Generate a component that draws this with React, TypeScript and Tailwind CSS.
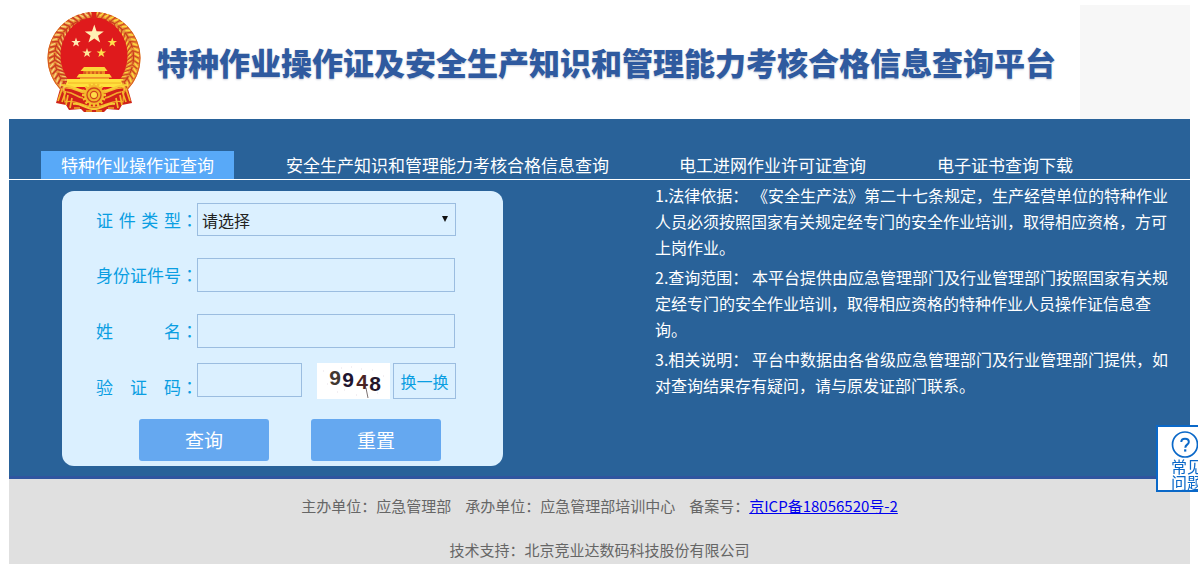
import React from "react";

function starPoints(cx: number, cy: number, r: number): string {
  return Array.from({ length: 10 }, (_, i) => {
    const radius = i % 2 === 0 ? r : r * 0.39;
    const angle = (Math.PI / 5) * i - Math.PI / 2;
    return `${(cx + radius * Math.cos(angle)).toFixed(2)},${(cy + radius * Math.sin(angle)).toFixed(2)}`;
  }).join(" ");
}

function Emblem() {
  const leftEars = Array.from({ length: 20 }, (_, i) => 132 + i * 7);
  const rightEars = Array.from({ length: 20 }, (_, i) => 48 - i * 7);
  const teeth = Array.from({ length: 16 }, (_, i) => i * 22.5);
  return (
    <svg viewBox="0 0 94 102" className="h-[102px] w-[94px] shrink-0" role="img" aria-label="国徽">
      <path d="M10 68 L84 68 L81 78 L85 92 L75 94 L72 99 L60 98 L57 101 L37 101 L34 98 L22 99 L19 94 L9 92 L13 78 Z" fill="#cf2319" />
      <ellipse cx="47" cy="47" rx="46.5" ry="46" fill="#e8963a" />
      <ellipse cx="47" cy="47" rx="46" ry="45.500" fill="none" stroke="#d9551f" strokeWidth="1" />
      <g fill="none">
        {leftEars.map((a) => (
          <g key={a} transform={`translate(47 46) rotate(${a})`}>
            <path d="M33 -4 L39 1 L45 -2" stroke="#cb3a24" strokeWidth="1.5" />
            <path d="M34 0 L37 2 M41 3 L45 0" stroke="#f9d27c" strokeWidth="1.3" />
          </g>
        ))}
        {rightEars.map((a) => (
          <g key={a} transform={`translate(47 46) rotate(${a})`}>
            <path d="M33 4 L39 -1 L45 2" stroke="#cf4a1c" strokeWidth="1.200" />
            <path d="M34 0 L37 -2 M41 -3 L45 0" stroke="#ffd83e" strokeWidth="1.500" />
          </g>
        ))}
      </g>
      <ellipse cx="47" cy="46" rx="39.500" ry="39" fill="none" stroke="#cc3a1e" strokeWidth="1.200" strokeDasharray="7 3" />
      <ellipse cx="47" cy="44.500" rx="33.500" ry="38" fill="#df1a1c" />
      <path d="M44.500 1 H49.500 V8 H44.500 Z" fill="#dc231b" />
      <polygon points={starPoints(47.3, 23.5, 10)} fill="#fff0b4" />
      <polygon points={starPoints(29, 31.5, 5)} fill="#ffebb4" />
      <polygon points={starPoints(65.3, 31.5, 5)} fill="#ffe04c" />
      <polygon points={starPoints(40, 42, 5)} fill="#ffe79a" />
      <polygon points={starPoints(54.3, 42, 5)} fill="#ffe04c" />
      <g fill="#fbd63a">
        <path d="M37 56 H57.500 L60.500 60 H33.500 Z" />
        <path d="M36.500 60 H58 V63 H36.500 Z" fill="#f08b24" />
        <path d="M32 63 H62.500 L65 66.500 H29.500 Z" />
        <path d="M33 66.500 H62 V69 H33 Z" fill="#f0a42a" />
        <path d="M20 68 H74.500 V71 L77 76 H17.500 L20 71 Z" fill="#ffe13c" />
      </g>
      <path d="M38 60.500 V63 M42 60.500 V63 M46 60.500 V63 M50 60.500 V63 M54 60.500 V63" stroke="#b9301a" strokeWidth="1" />
      <path d="M21 72 H74" stroke="#efa51f" strokeWidth="0.8" />
      <path d="M17 77 C28 76 33 83 40 82 L54 82 C61 83 66 76 77 77 L76 91 C64 88 58 96 47 96 C36 96 30 88 18 91 Z" fill="#d3201a" stroke="#f6b52d" strokeWidth="1.2" />
      <path d="M14 74 C24 74 29 79 37 80 M80 74 C70 74 65 79 57 80" fill="none" stroke="#f7ce36" strokeWidth="2.2" />
      <path d="M20 81 C27 82 30 86 36 87 M74 81 C67 82 64 86 58 87" fill="none" stroke="#f3a72c" strokeWidth="1.6" />
      <g transform="translate(47 84)">
        <circle r="10" fill="#f3b42b" />
        {teeth.map((a) => (
          <rect key={a} x="-1.2" y="-12" width="2.4" height="3.5" fill="#f5bd2e" transform={`rotate(${a})`} />
        ))}
        <circle r="7" fill="none" stroke="#d1461b" strokeWidth="1.3" />
        <circle r="3.6" fill="#ffdc48" stroke="#d1461b" strokeWidth="1.2" />
      </g>
      <path d="M15 78 L11 90 M19 80 L15 91 M21 84 L19 94 M25 87 L23 97 M79 78 L83 90 M75 80 L79 91 M73 84 L75 94 M69 87 L71 97" stroke="#f4b62c" strokeWidth="1.7" />
      <path d="M26 93 C33 91 38 98 47 98 C56 98 61 91 68 93" fill="none" stroke="#f6c936" strokeWidth="2" />
      <path d="M27 97 H33 M39 100 H45 M49 100 H55 M61 97 H67" stroke="#efab28" strokeWidth="1.4" />
    </svg>
  );
}

function Captcha() {
  return (
    <svg viewBox="0 0 73 36" className="h-9 w-[73px] shrink-0" role="img" aria-label="验证码图片">
      <rect width="73" height="36" fill="#fff" />
      <path d="M6 8h1M20 29h1M34 4h1M44 6h1M60 30h1M66 13h1M10 21h1M27 27h1M55 7h1M39 32h1M24 5h1" stroke="#e6dfe6" />
      <g fontFamily="'Liberation Sans', sans-serif" fontWeight="700" fontSize="21" textAnchor="middle">
        <text x="18" y="22" fill="#413831">9</text>
        <text x="31" y="24" fill="#1d1530">9</text>
        <text x="45" y="26" fill="#4a2424">4</text>
        <text x="58" y="28" fill="#24162a">8</text>
      </g>
      <path d="M49 25l2 10" stroke="#6d6262" strokeWidth="0.9" />
    </svg>
  );
}

function FieldLabel({ id, text, className = "" }: { id: string; text: string; className?: string }) {
  return (
    <label htmlFor={id} className={`flex w-[101px] shrink-0 text-[17px] leading-6 whitespace-nowrap text-[#0a9ee2] ${className}`}>
      <span className="w-[85px] shrink-0 [text-align-last:justify]">{text}</span>
      <span className="font-['Noto_Sans_CJK_TC',sans-serif]">：</span>
    </label>
  );
}

const tabs = [
  { text: "特种作业操作证查询", style: "bg-[#58a9f8] px-5" },
  { text: "安全生产知识和管理能力考核合格信息查询", style: "ml-[52px]" },
  { text: "电工进网作业许可证查询", style: "ml-[70px]" },
  { text: "电子证书查询下载", style: "ml-[71px]" },
];

const notes = [
  "1.法律依据： 《安全生产法》第二十七条规定，生产经营单位的特种作业人员必须按照国家有关规定经专门的安全作业培训，取得相应资格，方可上岗作业。",
  "2.查询范围： 本平台提供由应急管理部门及行业管理部门按照国家有关规定经专门的安全作业培训，取得相应资格的特种作业人员操作证信息查询。",
  "3.相关说明： 平台中数据由各省级应急管理部门及行业管理部门提供，如对查询结果存有疑问，请与原发证部门联系。",
];

const box = "border border-[#9bbde0] bg-transparent outline-none";

export default function App() {
  return (
    <div className="overflow-x-hidden bg-white pt-[5px] pr-2 pb-[7px] pl-[9px] font-['Noto_Sans_CJK_SC',sans-serif]">
      <header className="flex bg-[#f7f7f7]">
        <div className="flex h-[114px] w-[1071px] items-center gap-4 bg-white pl-[38px]">
          <Emblem />
          <h1 className="text-[31px] leading-10 font-black whitespace-nowrap text-[#2f5a9f] [text-shadow:0_1px_2px_#c5cbd8]">
            特种作业操作证及安全生产知识和管理能力考核合格信息查询平台
          </h1>
        </div>
      </header>

      <main className="border-b-[3px] border-[#30559f] bg-[#296299] pb-[10px]">
        <nav className="flex border-b border-white pt-8 pl-8">
          {tabs.map((tab) => (
            <a key={tab.text} href="#" className={`h-7 text-[17px] leading-7 whitespace-nowrap text-white ${tab.style}`}>
              {tab.text}
            </a>
          ))}
        </nav>

        <div className="flex items-start gap-[152px] pr-[14px] pl-[53px]">
          <form
            onSubmit={(e) => e.preventDefault()}
            className="mt-[11px] flex w-[441px] shrink-0 flex-col rounded-xl bg-[#dbf0ff] px-[34px] pt-3 pb-[5px]"
          >
            <div className="flex items-center">
              <FieldLabel id="type" text="证 件 类 型" />
              <div className="relative w-[259px]">
                <select id="type" className={`h-[33px] w-full appearance-none pl-1 text-base text-[#222] ${box}`}>
                  <option>请选择</option>
                </select>
                <svg viewBox="0 0 6 6" className="pointer-events-none absolute top-[13px] right-2 size-1.5">
                  <path d="M0 0H6L3 6Z" fill="#111" />
                </svg>
              </div>
            </div>
            <div className="mt-[22px] flex items-center">
              <FieldLabel id="idno" text="身份证件号" />
              <input id="idno" type="text" className={`h-[34px] w-[258px] px-2 ${box}`} />
            </div>
            <div className="mt-[22px] flex items-center">
              <FieldLabel id="name" text="姓 名" />
              <input id="name" type="text" className={`h-[34px] w-[258px] px-2 ${box}`} />
            </div>
            <div className="mt-[15px] flex items-start">
              <FieldLabel id="code" text="验 证 码" className="self-end" />
              <input id="code" type="text" className={`mr-[15px] h-[34px] w-[105px] px-2 ${box}`} />
              <Captcha />
              <button type="button" className={`ml-[3px] h-9 w-[63px] text-base text-[#0a9ee2] ${box}`}>
                换一换
              </button>
            </div>
            <div className="mt-5 flex gap-[42px] pl-[43px]">
              <button type="submit" className="h-[42px] w-[130px] rounded-[3px] bg-[#65a8f0] text-[19px] text-white">
                查询
              </button>
              <button type="reset" className="h-[42px] w-[130px] rounded-[3px] bg-[#65a8f0] text-[19px] text-white">
                重置
              </button>
            </div>
          </form>

          <section className="flex min-w-0 flex-1 flex-col gap-1 pt-[2px] text-base leading-[26px] text-white">
            {notes.map((note) => (
              <p key={note}>{note}</p>
            ))}
          </section>
        </div>
      </main>

      <footer className="flex flex-col items-center gap-5 bg-[#e0e0e0] pt-[15px] pb-[2px] text-[15px] leading-6 text-[#666]">
        <p className="flex gap-3.5">
          <span>主办单位：应急管理部</span>
          <span>承办单位：应急管理部培训中心</span>
          <span>
            备案号：
            <a href="#" className="text-[#0000ee] underline">
              京ICP备18056520号-2
            </a>
          </span>
        </p>
        <p>技术支持：北京竞业达数码科技股份有限公司</p>
      </footer>

      <a
        href="#"
        className="fixed top-[425px] -right-[18px] flex h-[67px] w-[60px] flex-col border-2 border-[#0a68c8] bg-white pt-[3px] pl-[13px] text-base leading-4 text-[#0a68c8]"
      >
        <svg viewBox="0 0 28 28" className="size-7 shrink-0" fill="none" stroke="#0a68c8">
          <circle cx="14" cy="14.500" r="12.500" strokeWidth="1.700" />
          <path d="M10.300 12.100C10.300 9.900 12 8.800 14 8.800c2.200 0 3.800 1.200 3.800 3.100 0 2.700-3.500 2.800-3.500 5.800" strokeWidth="2" />
          <path d="M14.200 19.300v2.300" strokeWidth="2.200" />
        </svg>
        <span className="w-8">常见问题</span>
      </a>
    </div>
  );
}
